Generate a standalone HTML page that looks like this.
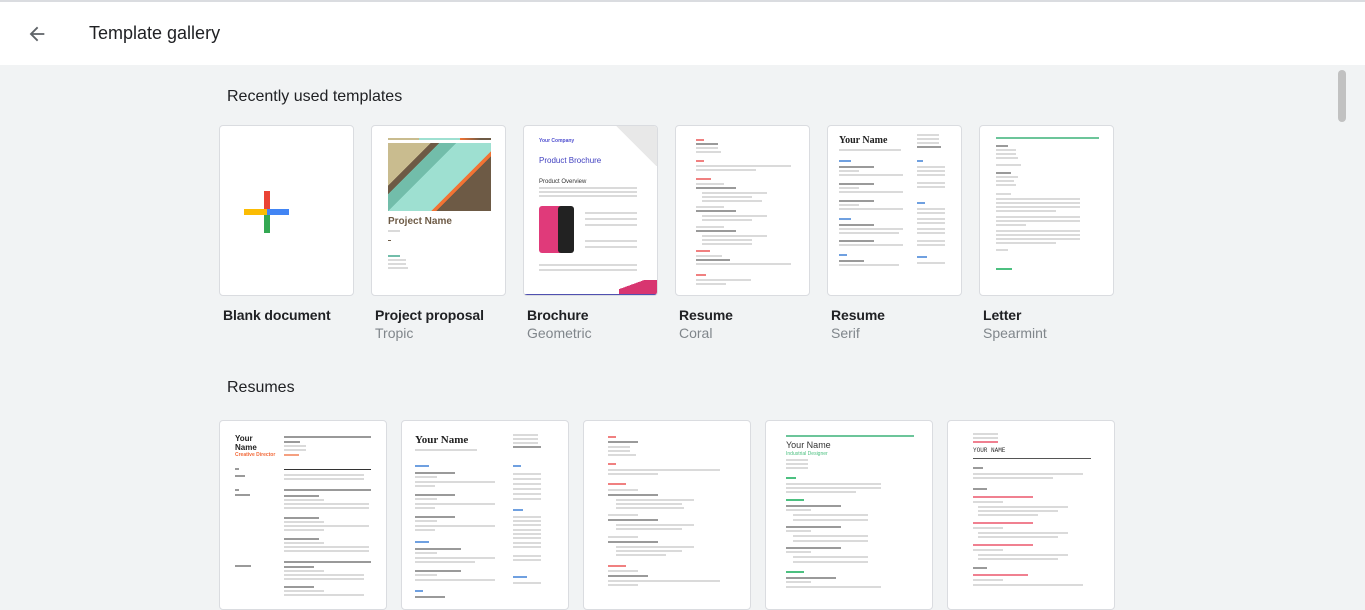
<!DOCTYPE html>
<html><head><meta charset="utf-8"><style>
*{box-sizing:border-box;margin:0;padding:0}
body{width:1365px;height:598px;overflow:hidden;background:#f1f3f4;font-family:"Liberation Sans",Arial,sans-serif;position:relative;color:#202124}
.hdr{position:absolute;left:0;top:0;width:1365px;height:65px;background:#fff;border-top:2px solid #dadce0}
.hdr .t{position:absolute;left:89px;top:21px;font-size:18px;color:#202124}
.h2{position:absolute;font-size:16px;color:#202124}
.tile{position:absolute;background:#fff;border:1px solid #dadce0;border-radius:4px;overflow:hidden}
.n{position:absolute;font-size:14px;font-weight:bold;color:#202124;letter-spacing:-0.1px}
.s{position:absolute;font-size:14px;color:#80868b}
.l{position:absolute;height:2px;background:#dadada}
.d{position:absolute;height:2px;background:#9a9a9a}
.sb{position:absolute;left:1338px;top:70px;width:8px;height:52px;background:#c1c1c1;border-radius:4px}
</style></head><body>
<div class="hdr">
<svg style="position:absolute;left:26px;top:21px" width="22" height="22" viewBox="0 0 24 24"><path d="M20 11H7.8l5.6-5.6L12 4l-8 8 8 8 1.4-1.4L7.8 13H20z" fill="#5f6368"/></svg>
<div class="t">Template gallery</div>
</div>
<div class="sb"></div>
<div class="h2" style="left:227px;top:88px">Recently used templates</div>

<!-- row 1 -->
<div class="tile" style="left:219px;top:125px;width:135px;height:171px">
<div style="position:absolute;left:44px;top:65px;width:6px;height:42px;background:#ea4335"></div>
<div style="position:absolute;left:44px;top:87px;width:6px;height:20px;background:#34a853"></div>
<div style="position:absolute;left:24px;top:83px;width:23px;height:6px;background:#fbbc04"></div>
<div style="position:absolute;left:47px;top:83px;width:22px;height:6px;background:#4285f4"></div>
</div>
<div class="tile" style="left:371px;top:125px;width:135px;height:171px">
<div style="position:absolute;left:16px;top:12px;width:103px;height:2px;background:linear-gradient(90deg,#c9bc8f 30%,#9ee0d1 30% 70%,#f27334 70%,#6d5a45 90%)"></div>
<div style="position:absolute;left:16px;top:17px;width:103px;height:68px;background:linear-gradient(135deg,#c9bc8f 0 25%,#6d5a45 25% 30%,#72bdaa 30% 40%,#9ee0d1 40% 65%,#f27334 65% 68%,#6d5a45 68%)"></div>
<div style="position:absolute;left:16px;top:90px;font-size:10px;font-weight:bold;color:#6d5a45">Project Name</div>
<div class="l" style="left:16px;top:104px;width:12px"></div>
<div style="position:absolute;left:16px;top:114px;width:3px;height:1px;background:#6d5a45"></div>
<div class="l" style="left:16px;top:129px;width:12px;background:#72bdaa"></div>
<div class="l" style="left:16px;top:133px;width:18px"></div><div class="l" style="left:16px;top:137px;width:18px"></div><div class="l" style="left:16px;top:141px;width:20px"></div>
</div>
<div class="tile" style="left:523px;top:125px;width:135px;height:171px">
<div style="position:absolute;left:15px;top:12px;font-size:5px;color:#5050d0;font-weight:bold">Your Company</div>
<div style="position:absolute;left:15px;top:30px;font-size:8px;color:#4040c0">Product Brochure</div>
<div style="position:absolute;left:15px;top:53px;font-size:6px;color:#333">Product Overview</div>
<div class="l" style="left:15px;top:61px;width:98px"></div><div class="l" style="left:15px;top:65px;width:98px"></div><div class="l" style="left:15px;top:69px;width:98px"></div>
<div style="position:absolute;left:15px;top:80px;width:27px;height:47px;background:#e03a7a;border-radius:3px"></div>
<div style="position:absolute;left:34px;top:80px;width:16px;height:47px;background:#222;border-radius:3px"></div>
<div class="l" style="left:61px;top:86px;width:52px"></div><div class="l" style="left:61px;top:92px;width:52px"></div><div class="l" style="left:61px;top:98px;width:52px"></div><div class="l" style="left:61px;top:114px;width:52px"></div><div class="l" style="left:61px;top:120px;width:52px"></div>
<div class="l" style="left:15px;top:138px;width:98px"></div><div class="l" style="left:15px;top:143px;width:98px"></div>
<div style="position:absolute;left:90px;top:0;width:45px;height:40px;background:linear-gradient(225deg,#e8e8e8 50%,transparent 50%)"></div>
<div style="position:absolute;left:95px;top:154px;width:40px;height:16px;background:linear-gradient(160deg,transparent 30%,#d83570 30%)"></div>
<div style="position:absolute;left:0;top:168px;width:135px;height:2px;background:#5050b0"></div>
</div>
<div class="tile" style="left:675px;top:125px;width:135px;height:171px">
<div class="l" style="left:20px;top:13px;width:8px;background:#f08080"></div><div class="d" style="left:20px;top:17px;width:22px"></div><div class="l" style="left:20px;top:21px;width:22px"></div><div class="l" style="left:20px;top:25px;width:25px"></div>
<div class="l" style="left:20px;top:34px;width:8px;background:#f08080"></div><div class="l" style="left:20px;top:39px;width:95px"></div><div class="l" style="left:20px;top:43px;width:60px"></div>
<div class="l" style="left:20px;top:52px;width:15px;background:#f08080"></div>
<div class="l" style="left:20px;top:57px;width:28px"></div><div class="d" style="left:20px;top:61px;width:40px"></div><div class="l" style="left:26px;top:66px;width:65px"></div><div class="l" style="left:26px;top:70px;width:50px"></div><div class="l" style="left:26px;top:74px;width:60px"></div>
<div class="l" style="left:20px;top:80px;width:28px"></div><div class="d" style="left:20px;top:84px;width:40px"></div><div class="l" style="left:26px;top:89px;width:65px"></div><div class="l" style="left:26px;top:93px;width:50px"></div>
<div class="l" style="left:20px;top:100px;width:28px"></div><div class="d" style="left:20px;top:104px;width:40px"></div><div class="l" style="left:26px;top:109px;width:65px"></div><div class="l" style="left:26px;top:113px;width:50px"></div><div class="l" style="left:26px;top:117px;width:50px"></div>
<div class="l" style="left:20px;top:124px;width:14px;background:#f08080"></div><div class="l" style="left:20px;top:129px;width:26px"></div><div class="d" style="left:20px;top:133px;width:34px"></div><div class="l" style="left:20px;top:137px;width:95px"></div>
<div class="l" style="left:20px;top:148px;width:10px;background:#f08080"></div><div class="l" style="left:20px;top:153px;width:55px"></div><div class="l" style="left:20px;top:157px;width:30px"></div>
</div>
<div class="tile" style="left:827px;top:125px;width:135px;height:171px">
<div style="position:absolute;left:11px;top:9px;font-size:10px;font-weight:bold;font-family:'Liberation Serif',serif;color:#222">Your Name</div>
<div class="l" style="left:11px;top:23px;width:62px"></div>
<div class="l" style="left:89px;top:8px;width:22px"></div><div class="l" style="left:89px;top:12px;width:22px"></div><div class="l" style="left:89px;top:16px;width:22px"></div><div class="d" style="left:89px;top:20px;width:24px"></div>
<div class="l" style="left:11px;top:34px;width:12px;background:#6fa0e0"></div>
<div class="d" style="left:11px;top:40px;width:35px"></div><div class="l" style="left:11px;top:44px;width:20px"></div><div class="l" style="left:11px;top:48px;width:64px"></div>
<div class="d" style="left:11px;top:57px;width:35px"></div><div class="l" style="left:11px;top:61px;width:20px"></div><div class="l" style="left:11px;top:65px;width:64px"></div>
<div class="d" style="left:11px;top:74px;width:35px"></div><div class="l" style="left:11px;top:78px;width:20px"></div><div class="l" style="left:11px;top:82px;width:64px"></div>
<div class="l" style="left:11px;top:92px;width:12px;background:#6fa0e0"></div>
<div class="d" style="left:11px;top:98px;width:35px"></div><div class="l" style="left:11px;top:102px;width:64px"></div><div class="l" style="left:11px;top:106px;width:60px"></div>
<div class="d" style="left:11px;top:114px;width:35px"></div><div class="l" style="left:11px;top:118px;width:64px"></div>
<div class="l" style="left:11px;top:128px;width:8px;background:#6fa0e0"></div><div class="d" style="left:11px;top:134px;width:25px"></div><div class="l" style="left:11px;top:138px;width:60px"></div>
<div class="l" style="left:89px;top:34px;width:6px;background:#6fa0e0"></div>
<div class="l" style="left:89px;top:40px;width:28px"></div><div class="l" style="left:89px;top:44px;width:28px"></div><div class="l" style="left:89px;top:48px;width:28px"></div><div class="l" style="left:89px;top:56px;width:28px"></div><div class="l" style="left:89px;top:60px;width:28px"></div>
<div class="l" style="left:89px;top:76px;width:8px;background:#6fa0e0"></div>
<div class="l" style="left:89px;top:82px;width:28px"></div><div class="l" style="left:89px;top:86px;width:28px"></div><div class="l" style="left:89px;top:92px;width:28px"></div><div class="l" style="left:89px;top:96px;width:28px"></div><div class="l" style="left:89px;top:102px;width:28px"></div><div class="l" style="left:89px;top:106px;width:28px"></div><div class="l" style="left:89px;top:114px;width:28px"></div><div class="l" style="left:89px;top:118px;width:28px"></div>
<div class="l" style="left:89px;top:130px;width:10px;background:#6fa0e0"></div><div class="l" style="left:89px;top:136px;width:28px"></div>
</div>
<div class="tile" style="left:979px;top:125px;width:135px;height:171px">
<div style="position:absolute;left:16px;top:11px;width:103px;height:2px;background:#6cc59a"></div>
<div class="d" style="left:16px;top:19px;width:12px"></div><div class="l" style="left:16px;top:23px;width:20px"></div><div class="l" style="left:16px;top:27px;width:20px"></div><div class="l" style="left:16px;top:31px;width:22px"></div>
<div class="l" style="left:16px;top:38px;width:25px"></div>
<div class="d" style="left:16px;top:46px;width:15px"></div><div class="l" style="left:16px;top:50px;width:22px"></div><div class="l" style="left:16px;top:54px;width:18px"></div><div class="l" style="left:16px;top:58px;width:20px"></div>
<div class="l" style="left:16px;top:67px;width:15px"></div>
<div class="l" style="left:16px;top:72px;width:84px"></div><div class="l" style="left:16px;top:76px;width:84px"></div><div class="l" style="left:16px;top:80px;width:84px"></div><div class="l" style="left:16px;top:84px;width:60px"></div>
<div class="l" style="left:16px;top:90px;width:84px"></div><div class="l" style="left:16px;top:94px;width:84px"></div><div class="l" style="left:16px;top:98px;width:30px"></div>
<div class="l" style="left:16px;top:104px;width:84px"></div><div class="l" style="left:16px;top:108px;width:84px"></div><div class="l" style="left:16px;top:112px;width:84px"></div><div class="l" style="left:16px;top:116px;width:60px"></div>
<div class="l" style="left:16px;top:123px;width:12px"></div>
<div class="l" style="left:16px;top:142px;width:16px;background:#4cc080"></div>
</div>

<div class="n" style="left:223px;top:307px">Blank document</div>
<div class="n" style="left:375px;top:307px">Project proposal</div><div class="s" style="left:375px;top:325px">Tropic</div>
<div class="n" style="left:527px;top:307px">Brochure</div><div class="s" style="left:527px;top:325px">Geometric</div>
<div class="n" style="left:679px;top:307px">Resume</div><div class="s" style="left:679px;top:325px">Coral</div>
<div class="n" style="left:831px;top:307px">Resume</div><div class="s" style="left:831px;top:325px">Serif</div>
<div class="n" style="left:983px;top:307px">Letter</div><div class="s" style="left:983px;top:325px">Spearmint</div>

<div class="h2" style="left:227px;top:379px">Resumes</div>

<div class="tile" style="left:219px;top:420px;width:168px;height:190px">
<div style="position:absolute;left:15px;top:13px;font-size:8px;font-weight:bold;line-height:9px;color:#222">Your<br>Name</div>
<div style="position:absolute;left:15px;top:31px;font-size:5px;font-weight:bold;color:#f26a3a">Creative Director</div>
<div style="position:absolute;left:64px;top:15px;width:87px;height:2px;background:#999"></div>
<div class="d" style="left:64px;top:20px;width:16px"></div><div class="l" style="left:64px;top:24px;width:22px"></div><div class="l" style="left:64px;top:28px;width:22px"></div><div class="l" style="left:64px;top:33px;width:15px;background:#f5a080"></div>
<div class="d" style="left:15px;top:47px;width:4px"></div><div class="d" style="left:15px;top:54px;width:10px"></div>
<div style="position:absolute;left:64px;top:48px;width:87px;height:1px;background:#333"></div><div class="l" style="left:64px;top:53px;width:80px"></div><div class="l" style="left:64px;top:57px;width:80px"></div>
<div class="d" style="left:15px;top:68px;width:4px"></div><div class="d" style="left:15px;top:73px;width:15px"></div>
<div style="position:absolute;left:64px;top:68px;width:87px;height:2px;background:#999"></div>
<div class="d" style="left:64px;top:74px;width:35px"></div><div class="l" style="left:64px;top:78px;width:40px"></div><div class="l" style="left:64px;top:82px;width:85px"></div><div class="l" style="left:64px;top:86px;width:85px"></div>
<div class="d" style="left:64px;top:96px;width:35px"></div><div class="l" style="left:64px;top:100px;width:40px"></div><div class="l" style="left:64px;top:104px;width:85px"></div><div class="l" style="left:64px;top:108px;width:40px"></div>
<div class="d" style="left:64px;top:117px;width:35px"></div><div class="l" style="left:64px;top:121px;width:40px"></div><div class="l" style="left:64px;top:125px;width:85px"></div><div class="l" style="left:64px;top:129px;width:85px"></div>
<div style="position:absolute;left:64px;top:140px;width:87px;height:2px;background:#999"></div>
<div class="d" style="left:15px;top:144px;width:16px"></div>
<div class="d" style="left:64px;top:145px;width:30px"></div><div class="l" style="left:64px;top:149px;width:40px"></div><div class="l" style="left:64px;top:153px;width:80px"></div><div class="l" style="left:64px;top:157px;width:80px"></div>
<div class="d" style="left:64px;top:165px;width:30px"></div><div class="l" style="left:64px;top:169px;width:40px"></div><div class="l" style="left:64px;top:173px;width:80px"></div>
</div>
<div class="tile" style="left:401px;top:420px;width:168px;height:190px">
<div style="position:absolute;left:13px;top:13px;font-size:11px;font-weight:bold;font-family:'Liberation Serif',serif;color:#222">Your Name</div>
<div class="l" style="left:13px;top:28px;width:62px"></div>
<div class="l" style="left:111px;top:13px;width:25px"></div><div class="l" style="left:111px;top:17px;width:25px"></div><div class="l" style="left:111px;top:21px;width:25px"></div><div class="d" style="left:111px;top:25px;width:28px"></div>
<div class="l" style="left:13px;top:44px;width:14px;background:#6fa0e0"></div><div class="l" style="left:111px;top:44px;width:8px;background:#6fa0e0"></div>
<div class="d" style="left:13px;top:51px;width:40px"></div><div class="l" style="left:13px;top:55px;width:22px"></div><div class="l" style="left:13px;top:60px;width:80px"></div><div class="l" style="left:13px;top:64px;width:20px"></div>
<div class="d" style="left:13px;top:73px;width:40px"></div><div class="l" style="left:13px;top:77px;width:22px"></div><div class="l" style="left:13px;top:82px;width:80px"></div><div class="l" style="left:13px;top:86px;width:20px"></div>
<div class="d" style="left:13px;top:95px;width:40px"></div><div class="l" style="left:13px;top:99px;width:22px"></div><div class="l" style="left:13px;top:104px;width:80px"></div><div class="l" style="left:13px;top:108px;width:20px"></div>
<div class="l" style="left:13px;top:120px;width:14px;background:#6fa0e0"></div>
<div class="d" style="left:13px;top:127px;width:46px"></div><div class="l" style="left:13px;top:131px;width:22px"></div><div class="l" style="left:13px;top:136px;width:80px"></div><div class="l" style="left:13px;top:140px;width:60px"></div>
<div class="d" style="left:13px;top:149px;width:46px"></div><div class="l" style="left:13px;top:153px;width:22px"></div><div class="l" style="left:13px;top:158px;width:80px"></div>
<div class="l" style="left:13px;top:169px;width:8px;background:#6fa0e0"></div><div class="d" style="left:13px;top:175px;width:30px"></div>
<div class="l" style="left:111px;top:52px;width:28px"></div><div class="l" style="left:111px;top:57px;width:28px"></div><div class="l" style="left:111px;top:62px;width:28px"></div><div class="l" style="left:111px;top:67px;width:28px"></div><div class="l" style="left:111px;top:72px;width:28px"></div><div class="l" style="left:111px;top:77px;width:28px"></div>
<div class="l" style="left:111px;top:88px;width:10px;background:#6fa0e0"></div>
<div class="l" style="left:111px;top:95px;width:28px"></div><div class="l" style="left:111px;top:99px;width:28px"></div><div class="l" style="left:111px;top:103px;width:28px"></div><div class="l" style="left:111px;top:108px;width:28px"></div><div class="l" style="left:111px;top:112px;width:28px"></div><div class="l" style="left:111px;top:116px;width:28px"></div><div class="l" style="left:111px;top:121px;width:28px"></div><div class="l" style="left:111px;top:125px;width:28px"></div><div class="l" style="left:111px;top:134px;width:28px"></div><div class="l" style="left:111px;top:138px;width:28px"></div>
<div class="l" style="left:111px;top:155px;width:14px;background:#6fa0e0"></div><div class="l" style="left:111px;top:161px;width:28px"></div>
</div>
<div class="tile" style="left:583px;top:420px;width:168px;height:190px">
<div class="l" style="left:24px;top:15px;width:8px;background:#f08080"></div><div class="d" style="left:24px;top:20px;width:30px"></div><div class="l" style="left:24px;top:25px;width:22px"></div><div class="l" style="left:24px;top:29px;width:22px"></div><div class="l" style="left:24px;top:33px;width:28px"></div>
<div class="l" style="left:24px;top:42px;width:8px;background:#f08080"></div><div class="l" style="left:24px;top:48px;width:112px"></div><div class="l" style="left:24px;top:52px;width:50px"></div>
<div class="l" style="left:24px;top:62px;width:18px;background:#f08080"></div>
<div class="l" style="left:24px;top:68px;width:30px"></div><div class="d" style="left:24px;top:73px;width:50px"></div><div class="l" style="left:32px;top:78px;width:78px"></div><div class="l" style="left:32px;top:82px;width:66px"></div><div class="l" style="left:32px;top:86px;width:68px"></div>
<div class="l" style="left:24px;top:93px;width:30px"></div><div class="d" style="left:24px;top:98px;width:50px"></div><div class="l" style="left:32px;top:103px;width:78px"></div><div class="l" style="left:32px;top:107px;width:66px"></div>
<div class="l" style="left:24px;top:115px;width:30px"></div><div class="d" style="left:24px;top:120px;width:50px"></div><div class="l" style="left:32px;top:125px;width:78px"></div><div class="l" style="left:32px;top:129px;width:66px"></div><div class="l" style="left:32px;top:133px;width:50px"></div>
<div class="l" style="left:24px;top:144px;width:18px;background:#f08080"></div><div class="l" style="left:24px;top:149px;width:30px"></div><div class="d" style="left:24px;top:154px;width:40px"></div><div class="l" style="left:24px;top:159px;width:112px"></div><div class="l" style="left:24px;top:163px;width:30px"></div>
</div>
<div class="tile" style="left:765px;top:420px;width:168px;height:190px">
<div style="position:absolute;left:20px;top:14px;width:128px;height:2px;background:#6cc59a"></div>
<div style="position:absolute;left:20px;top:19px;font-size:9px;color:#333">Your Name</div>
<div style="position:absolute;left:20px;top:30px;font-size:5px;color:#4cc080">Industrial Designer</div>
<div class="l" style="left:20px;top:38px;width:22px"></div><div class="l" style="left:20px;top:42px;width:22px"></div><div class="l" style="left:20px;top:46px;width:22px"></div>
<div class="l" style="left:20px;top:56px;width:10px;background:#4cc080"></div><div class="l" style="left:20px;top:62px;width:95px"></div><div class="l" style="left:20px;top:66px;width:95px"></div><div class="l" style="left:20px;top:70px;width:70px"></div>
<div class="l" style="left:20px;top:78px;width:18px;background:#4cc080"></div>
<div class="d" style="left:20px;top:84px;width:55px"></div><div class="l" style="left:20px;top:88px;width:25px"></div><div class="l" style="left:27px;top:93px;width:75px"></div><div class="l" style="left:27px;top:98px;width:75px"></div>
<div class="d" style="left:20px;top:105px;width:55px"></div><div class="l" style="left:20px;top:109px;width:25px"></div><div class="l" style="left:27px;top:114px;width:75px"></div><div class="l" style="left:27px;top:119px;width:75px"></div>
<div class="d" style="left:20px;top:126px;width:55px"></div><div class="l" style="left:20px;top:130px;width:25px"></div><div class="l" style="left:27px;top:135px;width:75px"></div><div class="l" style="left:27px;top:140px;width:75px"></div>
<div class="l" style="left:20px;top:150px;width:18px;background:#4cc080"></div><div class="d" style="left:20px;top:156px;width:50px"></div><div class="l" style="left:20px;top:160px;width:25px"></div><div class="l" style="left:20px;top:165px;width:95px"></div>
</div>
<div class="tile" style="left:947px;top:420px;width:168px;height:190px">
<div class="l" style="left:25px;top:12px;width:25px"></div><div class="l" style="left:25px;top:16px;width:25px"></div><div class="l" style="left:25px;top:20px;width:25px;background:#f08090"></div>
<div style="position:absolute;left:25px;top:26px;font-size:6px;font-family:'Liberation Mono',monospace;color:#333">YOUR NAME</div>
<div style="position:absolute;left:25px;top:37px;width:118px;height:1px;background:#555"></div>
<div class="d" style="left:25px;top:46px;width:10px"></div><div class="l" style="left:25px;top:52px;width:110px"></div><div class="l" style="left:25px;top:56px;width:80px"></div>
<div class="d" style="left:25px;top:67px;width:14px"></div>
<div class="l" style="left:25px;top:75px;width:60px;background:#f08090"></div><div class="l" style="left:25px;top:80px;width:30px"></div><div class="l" style="left:30px;top:85px;width:90px"></div><div class="l" style="left:30px;top:89px;width:80px"></div><div class="l" style="left:30px;top:93px;width:60px"></div>
<div class="l" style="left:25px;top:101px;width:60px;background:#f08090"></div><div class="l" style="left:25px;top:106px;width:30px"></div><div class="l" style="left:30px;top:111px;width:90px"></div><div class="l" style="left:30px;top:115px;width:80px"></div>
<div class="l" style="left:25px;top:123px;width:60px;background:#f08090"></div><div class="l" style="left:25px;top:128px;width:30px"></div><div class="l" style="left:30px;top:133px;width:90px"></div><div class="l" style="left:30px;top:137px;width:80px"></div>
<div class="d" style="left:25px;top:146px;width:14px"></div><div class="l" style="left:25px;top:153px;width:55px;background:#f08090"></div><div class="l" style="left:25px;top:158px;width:30px"></div><div class="l" style="left:25px;top:163px;width:110px"></div>
</div>
</body></html>
